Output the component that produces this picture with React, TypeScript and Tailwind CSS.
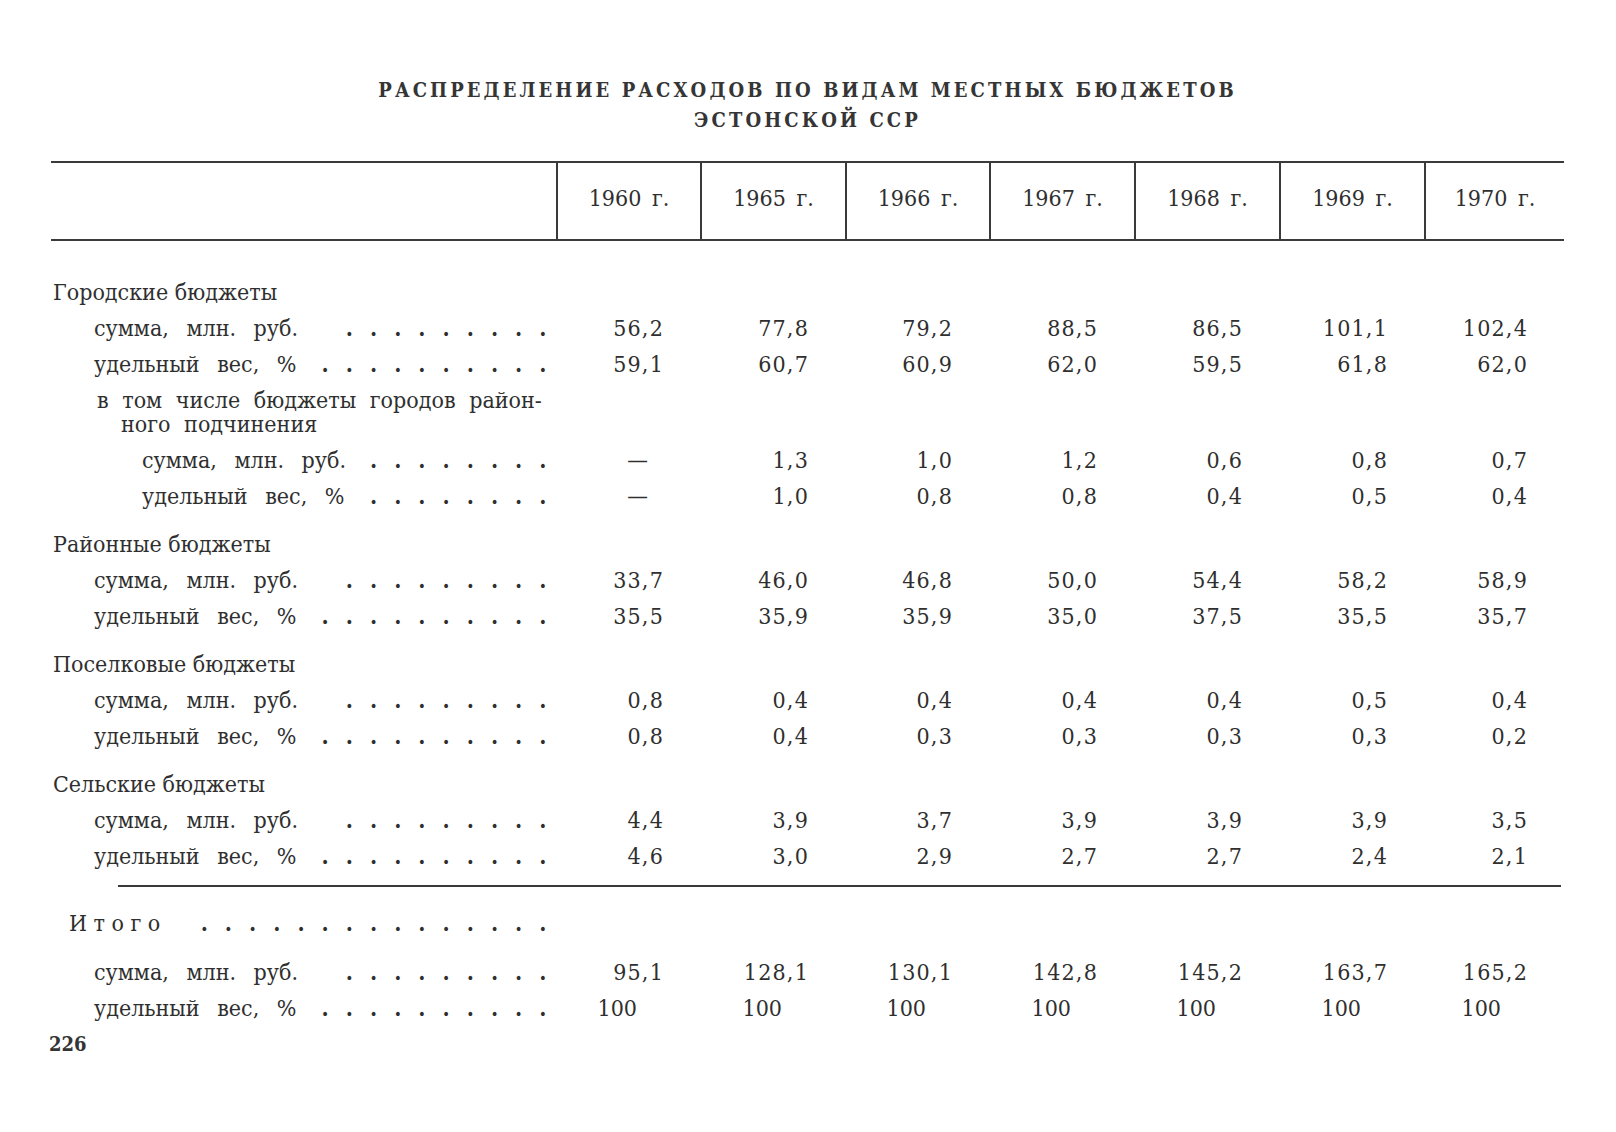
const YEARS = ['1960 г.', '1965 г.', '1966 г.', '1967 г.', '1968 г.', '1969 г.', '1970 г.']

const COLS = 'grid grid-cols-[505px_144px_145px_144px_145px_145px_145px_140px]'

type Row = { label: string; dots: number; values: string[]; indent: 'item' | 'sub' }

const GROUPS: { title: string; rows: Row[]; sub?: Row[] }[] = [
  {
    title: 'Городские бюджеты',
    rows: [
      { label: 'сумма, млн. руб.', dots: 9, indent: 'item', values: ['56,2', '77,8', '79,2', '88,5', '86,5', '101,1', '102,4'] },
      { label: 'удельный вес, %', dots: 10, indent: 'item', values: ['59,1', '60,7', '60,9', '62,0', '59,5', '61,8', '62,0'] },
    ],
    sub: [
      { label: 'сумма, млн. руб.', dots: 8, indent: 'sub', values: ['—', '1,3', '1,0', '1,2', '0,6', '0,8', '0,7'] },
      { label: 'удельный вес, %', dots: 8, indent: 'sub', values: ['—', '1,0', '0,8', '0,8', '0,4', '0,5', '0,4'] },
    ],
  },
  {
    title: 'Районные бюджеты',
    rows: [
      { label: 'сумма, млн. руб.', dots: 9, indent: 'item', values: ['33,7', '46,0', '46,8', '50,0', '54,4', '58,2', '58,9'] },
      { label: 'удельный вес, %', dots: 10, indent: 'item', values: ['35,5', '35,9', '35,9', '35,0', '37,5', '35,5', '35,7'] },
    ],
  },
  {
    title: 'Поселковые бюджеты',
    rows: [
      { label: 'сумма, млн. руб.', dots: 9, indent: 'item', values: ['0,8', '0,4', '0,4', '0,4', '0,4', '0,5', '0,4'] },
      { label: 'удельный вес, %', dots: 10, indent: 'item', values: ['0,8', '0,4', '0,3', '0,3', '0,3', '0,3', '0,2'] },
    ],
  },
  {
    title: 'Сельские бюджеты',
    rows: [
      { label: 'сумма, млн. руб.', dots: 9, indent: 'item', values: ['4,4', '3,9', '3,7', '3,9', '3,9', '3,9', '3,5'] },
      { label: 'удельный вес, %', dots: 10, indent: 'item', values: ['4,6', '3,0', '2,9', '2,7', '2,7', '2,4', '2,1'] },
    ],
  },
]

const TOTAL: Row[] = [
  { label: 'сумма, млн. руб.', dots: 9, indent: 'item', values: ['95,1', '128,1', '130,1', '142,8', '145,2', '163,7', '165,2'] },
  { label: 'удельный вес, %', dots: 10, indent: 'item', values: ['100', '100', '100', '100', '100', '100', '100'] },
]

function Dots({ count }: { count: number }) {
  return (
    <div className="ml-auto flex pr-[1px]">
      {Array.from({ length: count }).map((_, i) => (
        <span key={i} className="w-[24.2px] text-center font-bold">.</span>
      ))}
    </div>
  )
}

function Value({ v }: { v: string }) {
  if (v === '—') return <div className="pr-[52px] text-right">—</div>
  if (v === '100') return <div className="pr-[63px] text-right">100</div>
  return <div className="pr-[36px] text-right tracking-[1.2px]">{v}</div>
}

function DataRow({ row }: { row: Row }) {
  return (
    <div className={`${COLS} h-[36px] items-center`}>
      <div className={`flex items-center ${row.indent === 'sub' ? 'pl-[91px]' : 'pl-[43px]'}`}>
        <span className="[word-spacing:11px]">{row.label}</span>
        <Dots count={row.dots} />
      </div>
      {row.values.map((v, i) => (
        <Value key={i} v={v} />
      ))}
    </div>
  )
}

export default function App() {
  return (
    <div className="min-h-[1132px] w-[1616px] bg-white text-[#2f2f2f] font-['DejaVu_Serif_Condensed','Liberation_Serif',serif] text-[23px]">
      <div className="ml-[51px] w-[1513px] pt-[75px]">
        <div className="text-center text-[20px] font-bold leading-[30px] tracking-[3.1px] text-[#353535]">
          <div>РАСПРЕДЕЛЕНИЕ РАСХОДОВ ПО ВИДАМ МЕСТНЫХ БЮДЖЕТОВ</div>
          <div>ЭСТОНСКОЙ ССР</div>
        </div>

        <div className={`${COLS} mt-[26px] h-[80px] border-y-2 border-[#3a3a3a]`}>
          <div />
          {YEARS.map((y) => (
            <div key={y} className="flex items-center justify-center border-l-2 border-[#3a3a3a] pb-[6px] [word-spacing:4px]">
              {y}
            </div>
          ))}
        </div>

        <div className="mt-[33px]">
          {GROUPS.map((g, gi) => (
            <div key={g.title} className={gi === 0 ? '' : 'mt-[12px]'}>
              <div className="flex h-[36px] items-center pl-[2px]">{g.title}</div>
              {g.rows.map((r, i) => (
                <DataRow key={i} row={r} />
              ))}
              {g.sub && (
                <>
                  <div className="py-[6px] pl-[46px] leading-[24px] [word-spacing:7px]">
                    <div>в том числе бюджеты городов район-</div>
                    <div className="pl-[24px]">ного подчинения</div>
                  </div>
                  {g.sub.map((r, i) => (
                    <DataRow key={i} row={r} />
                  ))}
                </>
              )}
            </div>
          ))}
        </div>

        <div className="ml-[67px] mt-[11px] h-[2px] w-[1443px] bg-[#3a3a3a]" />

        <div className={`${COLS} mt-[18px] h-[36px] items-center`}>
          <div className="flex items-center pl-[18px]">
            <span className="tracking-[6.5px]">Итого</span>
            <Dots count={15} />
          </div>
        </div>
        <div className="mt-[13px]">
          {TOTAL.map((r, i) => (
            <DataRow key={i} row={r} />
          ))}
        </div>

        <div className="mt-[6px] -ml-[2px] text-[20px] font-bold leading-[24px] text-[#353535]">226</div>
      </div>
    </div>
  )
}
